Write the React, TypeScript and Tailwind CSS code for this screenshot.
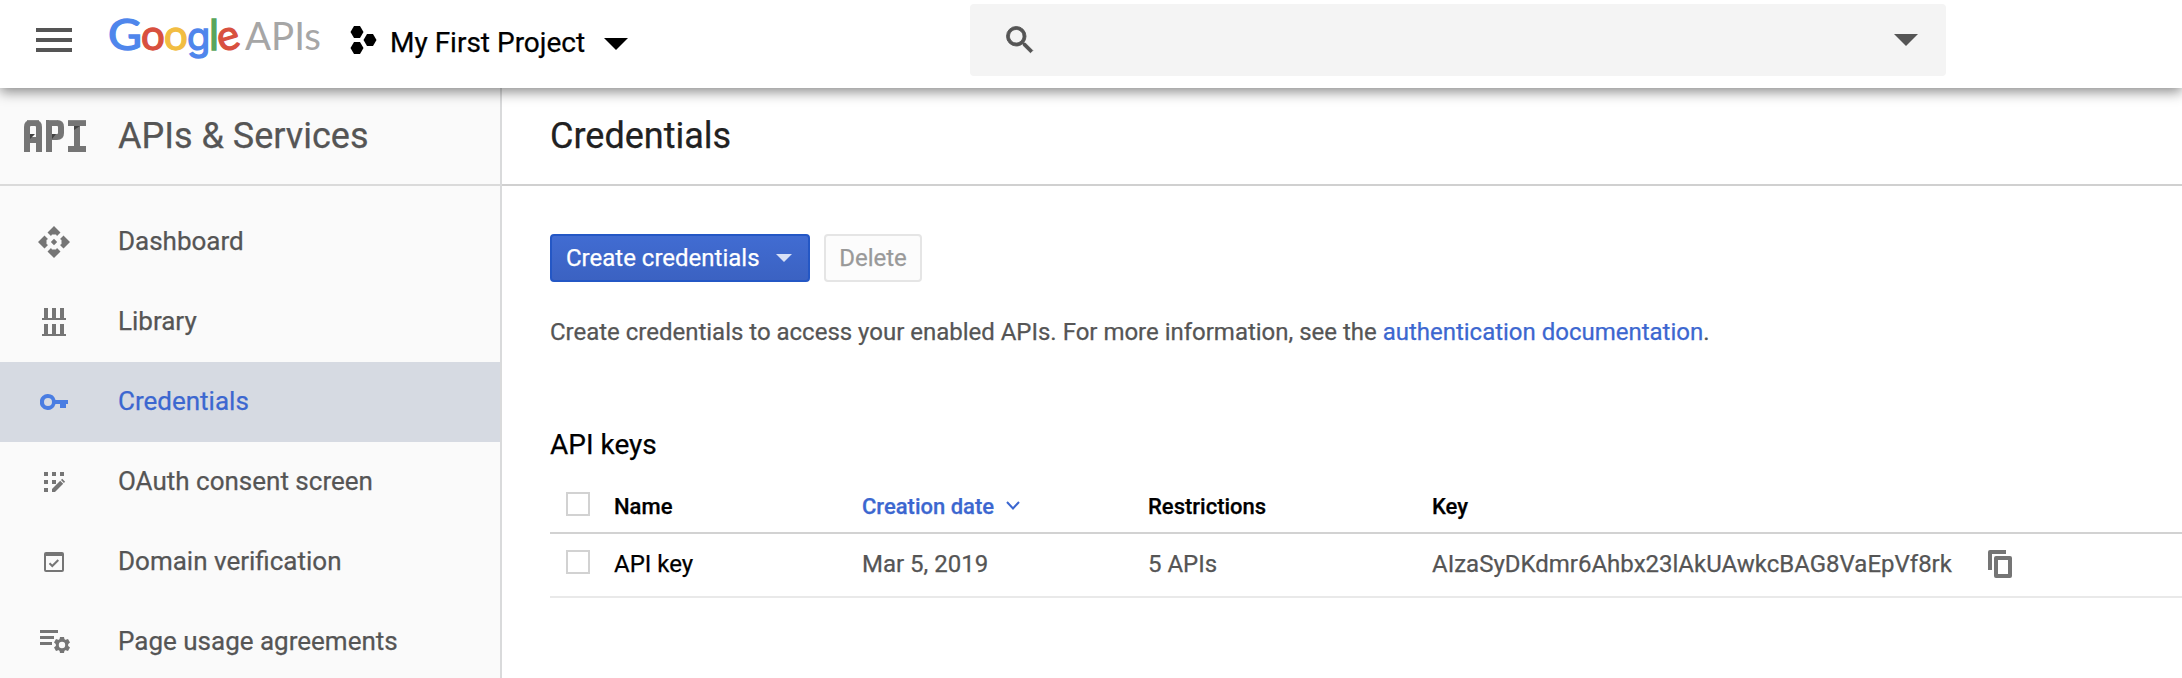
import React from "react";

type IconProps = { className?: string };

const MenuIcon = () => (
  <svg width="36" height="24" viewBox="0 0 36 24" fill="#555">
    <rect width="36" height="4" />
    <rect y="10" width="36" height="4" />
    <rect y="20" width="36" height="4" />
  </svg>
);

const Logo = () => (
  <svg width="222" height="72" viewBox="0 0 222 72" className="font-['Lato',sans-serif]" aria-label="Google APIs">
    <g fontSize="42" strokeWidth="1.3">
      <text x="0" y="46" fill="#4f86ec" stroke="#4f86ec" textLength="34" lengthAdjust="spacingAndGlyphs">G</text>
      <text x="33" y="46" fill="#d8503f" stroke="#d8503f">o</text>
      <text x="56" y="46" fill="#f2bd42" stroke="#f2bd42">o</text>
      <text x="79" y="46" fontSize="38" fill="#4f86ec" stroke="#4f86ec" className="font-['Inter',sans-serif]">g</text>
      <text x="101" y="46" fill="#58a55c" stroke="#58a55c">l</text>
      <text x="109.500" y="46" fill="#d8503f" stroke="#d8503f" transform="rotate(-16 120 36)">e</text>
    </g>
    <text x="137" y="46" fontSize="39" fill="#a6a6a6" textLength="76" lengthAdjust="spacingAndGlyphs">APIs</text>
  </svg>
);

const ProjectIcon = () => (
  <svg width="28" height="28" viewBox="0 0 28 28" fill="#000">
    <path d="M4 0h6l3.500 6-3.500 6H4L.5 6z" />
    <path d="M17 8h6l3.500 6-3.500 6h-6l-3.500-6z" />
    <path d="M4 16h6l3.500 6-3.500 6H4L.5 22z" />
  </svg>
);

const Caret = ({ className }: IconProps) => (
  <svg viewBox="0 0 24 12" className={className} fill="currentColor">
    <path d="M0 0h24L12 12z" />
  </svg>
);

const SearchIcon = () => (
  <svg width="36" height="36" viewBox="0 0 24 24" fill="#555" stroke="#555" strokeWidth="0.6">
    <path d="M15.500 14h-.79l-.28-.27A6.471 6.471 0 0 0 16 9.500 6.500 6.500 0 1 0 9.500 16c1.610 0 3.090-.59 4.230-1.570l.27.28v.79l5 4.990L20.490 19l-4.990-5zm-6 0C7.010 14 5 11.990 5 9.500S7.010 5 9.500 5 14 7.010 14 9.500 11.990 14 9.500 14z" />
  </svg>
);

const ApiIcon = () => (
  <svg width="62" height="32" viewBox="0 0 62 32" fill="none" stroke="#757575" strokeWidth="6">
    <path d="M3 32V7q0-4 4-4h4q4 0 4 4v25M3 20h12" />
    <path d="M25 32V3h8q4 0 4 4v6q0 4-4 4h-8" />
    <path d="M44 3h18M44 29h18M53 3v26" />
    <path d="M6 14h5l-5 5zM28 14h4l-4 5zM50 6h6l-6 4z" fill="#424242" stroke="none" />
    <path d="M3 .5h12M25 .5h8M44 .5h18" stroke="#8a8a8a" strokeWidth="1" />
  </svg>
);

const DashboardIcon = () => (
  <svg width="32" height="32" viewBox="0 0 32 32" fill="#757575">
    <path d="M9.500 6.500L16 0l6.500 6.500-3.500 3.500-1-1.500h-4L13 10z" />
    <path d="M9.500 25.500L16 32l6.500-6.500L19 22l-1 1.500h-4L13 22z" />
    <path d="M6.500 9.500L0 16l6.500 6.500L10 19l-1.500-1v-4L10 13z" />
    <path d="M25.500 9.500L32 16l-6.500 6.500L22 19l1.500-1v-4L22 13z" />
    <path d="M16 12.800l3.200 3.200-3.200 3.200-3.200-3.200z" />
  </svg>
);

const LibraryIcon = () => (
  <svg width="24" height="28" viewBox="0 0 24 28" fill="#757575">
    <path d="M2 0h4v10h4V0h4v10h4V0h4v10h2v2H0v-2h2zM2 16h4v10h4V16h4v10h4V16h4v10h2v2H0v-2h2z" />
  </svg>
);

const KeyIcon = () => (
  <svg width="28" height="16" viewBox="0 0 28 16" fill="#4a7de2">
    <path fillRule="evenodd" d="M8 0a8 8 0 1 0 7.500 10H20v4h6v-4h2V6H15.500A8 8 0 0 0 8 0zm0 4a4 4 0 1 1 0 8 4 4 0 0 1 0-8z" />
  </svg>
);

const ConsentIcon = () => (
  <svg width="22" height="20" viewBox="0 0 22 20" className="ml-[2px]" fill="#757575">
    <path d="M0 0h4v4H0zM8 0h4v4H8zM16 0h4v4h-4zM0 8h4v4H0zM8 8h4v4H8zM0 16h4v4H0z" />
    <path d="M8 17l8.200-8.200 3 3L11 20H8zM17 8l1.200-1.200 2.900 2.900-1.200 1.200z" />
  </svg>
);

const DomainIcon = () => (
  <svg width="20" height="20" viewBox="0 0 20 20">
    <path fillRule="evenodd" fill="#757575" d="M2 0h16a2 2 0 0 1 2 2v16a2 2 0 0 1-2 2H2a2 2 0 0 1-2-2V2a2 2 0 0 1 2-2zm0 4v14h16V4z" />
    <path d="M5.500 11.200l2.800 2.800 6-6" fill="none" stroke="#757575" strokeWidth="2" />
  </svg>
);

const AgreementIcon = () => (
  <svg width="30" height="24" viewBox="0 0 30 24" className="ml-[2px]" fill="#757575">
    <path d="M0 0h18v3H0zM0 6h14v3H0zM0 12h12v3H0z" />
    <circle cx="22" cy="15" r="4.700" fill="none" stroke="#757575" strokeWidth="3" />
    <path d="M20 7h4l.6 3h-5.200zM20 23h4l.6-3h-5.200zM14 12.400l2-3.400 3 1-2.600 4.400zM30 12.400L28 9l-3 1 2.600 4.400zM14 17.600l2 3.400 3-1-2.600-4.400zM30 17.600L28 21l-3-1 2.600-4.400z" />
  </svg>
);

const CopyIcon = () => (
  <svg width="24" height="28" viewBox="0 0 24 28" fill="#757575">
    <path d="M18 0H2a2 2 0 0 0-2 2v18h4V4h14z" />
    <path fillRule="evenodd" d="M8 6h14a2 2 0 0 1 2 2v18a2 2 0 0 1-2 2H8a2 2 0 0 1-2-2V8a2 2 0 0 1 2-2zm2 4v14h10V10z" />
  </svg>
);

const navItems = [
  { label: "Dashboard", icon: <DashboardIcon /> },
  { label: "Library", icon: <LibraryIcon /> },
  { label: "Credentials", icon: <KeyIcon />, active: true },
  { label: "OAuth consent screen", icon: <ConsentIcon /> },
  { label: "Domain verification", icon: <DomainIcon /> },
  { label: "Page usage agreements", icon: <AgreementIcon /> },
];

const Checkbox = () => (
  <span role="checkbox" aria-checked="false" className="block size-6 border-2 border-[#d2d2d2] bg-white" />
);

const columns = "grid grid-cols-[48px_248px_286px_284px_1fr] items-center pl-4";

export default function App() {
  return (
    <div className="flex h-[678px] w-full flex-col overflow-hidden bg-white font-['Roboto',sans-serif] text-[#555] [-webkit-text-stroke-width:0.25px]">
      <header className="relative z-10 flex h-[88px] shrink-0 bg-white shadow-[0_4px_12px_rgba(0,0,0,0.45)]">
        <div className="flex w-[970px] items-start pl-9">
          <button className="mt-7"><MenuIcon /></button>
          <div className="mt-1 ml-9 w-[242px] shrink-0"><Logo /></div>
          <button className="mt-[26px] flex items-start text-black">
            <ProjectIcon />
            <span className="mt-px ml-3 w-[214px] text-left text-[28px] leading-8 whitespace-nowrap">My First Project</span>
            <Caret className="mt-3 h-3 w-6" />
          </button>
        </div>
        <div className="mt-1 flex h-[72px] w-[976px] items-start justify-between rounded bg-[#f4f4f4] pt-[17px] pr-7 pl-8">
          <span className="pt-px"><SearchIcon /></span>
          <Caret className="mt-[13px] h-3 w-6" />
        </div>
      </header>

      <div className="flex min-h-0 flex-1">
        <aside className="w-[502px] shrink-0 border-r-2 border-[#d9dadb] bg-[#fafafa]">
          <div className="flex h-[98px] items-center border-b-2 border-[#dadada] pl-6">
            <ApiIcon />
            <h2 className="ml-8 text-[36px] leading-[42px]">APIs &amp; Services</h2>
          </div>
          <nav className="pt-4">
            {navItems.map((item) => (
              <a
                key={item.label}
                className={
                  item.active
                    ? "flex h-20 items-center bg-[#d6dae2] text-[#3c67d0]"
                    : "flex h-20 items-center"
                }
              >
                <span className="flex w-[108px] shrink-0 justify-center">{item.icon}</span>
                <span className="ml-[10px] pb-[2px] text-[26px] leading-8">{item.label}</span>
              </a>
            ))}
          </nav>
        </aside>

        <main className="min-w-0 flex-1">
          <div className="flex h-[98px] items-center border-b-2 border-[#d0d0d0] pl-12">
            <h1 className="text-[36px] leading-[42px] text-[#212121]">Credentials</h1>
          </div>
          <div className="pt-12 pl-12">
            <div className="flex gap-[14px] text-[24px]">
              <button className="flex h-12 w-[260px] items-center justify-between rounded border-2 border-[#2457c5] bg-linear-to-b from-[#416cd2] to-[#3b62c2] pr-4 pl-[14px] text-white">
                <span className="leading-7">Create credentials</span>
                <Caret className="h-2 w-4 text-[#d8e1f6]" />
              </button>
              <button className="h-12 w-[98px] rounded border-2 border-[#e5e5e5] bg-[#fcfcfc] text-center leading-[44px] text-[#999]">
                Delete
              </button>
            </div>
            <p className="mt-9 text-[24px] leading-7 tracking-[-0.01px] whitespace-nowrap">
              Create credentials to access your enabled APIs. For more information, see the{" "}
              <a className="text-[#3c67d0]">authentication documentation</a>.
            </p>
            <h3 className="mt-[83px] text-[28px] leading-8 text-black">API keys</h3>
            <div className="mt-[17px]">
              <div className={`${columns} h-14 border-b-2 border-[#d2d2d2] pt-1 text-[22px] leading-6 font-medium text-black`}>
                <span className="pb-[6px]"><Checkbox /></span>
                <span>Name</span>
                <span className="flex items-center text-[#3c67d0]">
                  Creation date
                  <svg width="14" height="9" viewBox="0 0 14 9" className="-mt-[3px] ml-3" fill="none" stroke="currentColor" strokeWidth="2">
                    <path d="M1 1l6 6.500L13 1" />
                  </svg>
                </span>
                <span>Restrictions</span>
                <span>Key</span>
              </div>
              <div className={`${columns} h-16 border-b-2 border-[#e9e9e9] text-[24px] leading-7`}>
                <span className="pb-[6px]"><Checkbox /></span>
                <span className="pb-[2px] text-black">API key</span>
                <span className="pb-[2px]">Mar 5, 2019</span>
                <span className="pb-[2px]">5 APIs</span>
                <span className="flex items-center pb-[2px]">
                  <span className="w-[556px]">AIzaSyDKdmr6Ahbx23lAkUAwkcBAG8VaEpVf8rk</span>
                  <CopyIcon />
                </span>
              </div>
            </div>
          </div>
        </main>
      </div>
    </div>
  );
}
